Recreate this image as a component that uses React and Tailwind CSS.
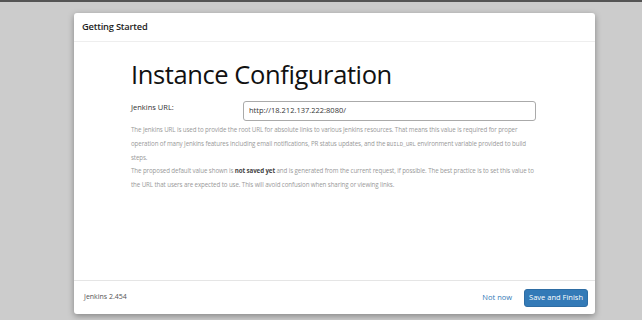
export default function App() {
  return (
    <div className="w-[642px] h-[320px] bg-[#cccccc] border-t-2 border-[#555] relative overflow-hidden" style={{ fontFamily: '"Open Sans", "Noto Sans", sans-serif' }}>
      <div className="absolute left-[74px] top-[11px] w-[521px] h-[301px] bg-white rounded-[3px] shadow-[0_2px_6px_rgba(0,0,0,0.35)] flex flex-col">
        <div className="h-[29px] border-b border-[#eeeeee] flex items-center px-[8px]">
          <span className="text-[9.3px] font-semibold text-[#222] tracking-[-0.2px]">Getting Started</span>
        </div>
        <div className="flex-1 px-[57px] pt-[14px]">
          <h1 className="text-[25.5px] leading-[36px] text-[#111] tracking-[-0.4px] font-normal">Instance Configuration</h1>
          <div className="flex items-start mt-[9px]">
            <div className="w-[112px] text-[7.5px] text-[#333] pt-[1px]">Jenkins URL:</div>
            <div className="w-[293px] h-[20px] border border-[#aaaaaa] rounded-[3px] flex items-center px-[5px] text-[7.5px] text-[#333]">http://18.212.137.222:8080/</div>
          </div>
          <div className="mt-[2px] text-[6.2px] leading-[13.8px] text-[#999] tracking-[-0.1px] w-[410px]">
            <p>The Jenkins URL is used to provide the root URL for absolute links to various Jenkins resources. That means this value is required for proper operation of many Jenkins features including email notifications, PR status updates, and the <span className="font-mono text-[5.5px] leading-[1]">BUILD_URL</span> environment variable provided to build steps.</p>
            <p>The proposed default value shown is <b className="text-[#444]">not saved yet</b> and is generated from the current request, if possible. The best practice is to set this value to the URL that users are expected to use. This will avoid confusion when sharing or viewing links.</p>
          </div>
        </div>
        <div className="h-[34px] border-t border-[#e5e5e5] flex items-center justify-between pl-[10px] pr-[7px]">
          <span className="text-[7px] text-[#555]">Jenkins 2.454</span>
          <div className="flex items-center gap-[12px]">
            <span className="text-[7.5px] text-[#337ab7]">Not now</span>
            <button className="h-[18px] px-[4px] bg-[#337ab7] border border-[#2e6da4] rounded-[3px] text-white text-[7.5px]">Save and Finish</button>
          </div>
        </div>
      </div>
    </div>
  );
}
